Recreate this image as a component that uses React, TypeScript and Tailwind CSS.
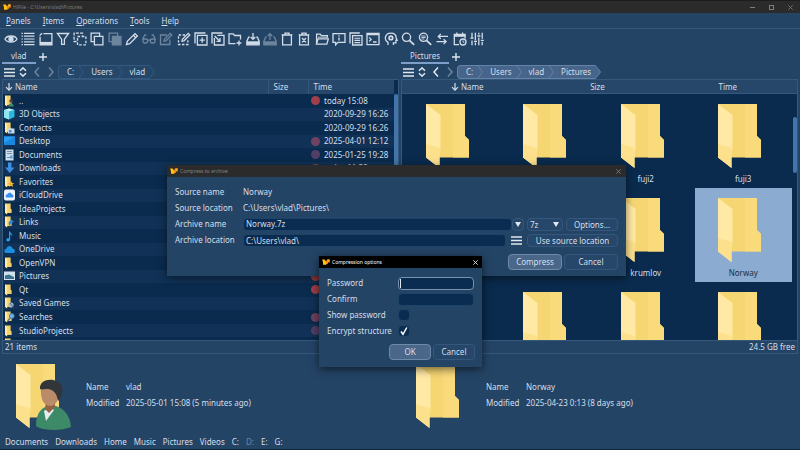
import React from "react";

type Kids = { children?: React.ReactNode };

function Ico({ children, muted }: Kids & { muted?: boolean }) {
  return (
    <svg
      viewBox="0 0 14 14"
      className={muted ? "size-3.5 text-[#6e859e]" : "size-3.5 text-[#d3dde8]"}
      fill="none"
      stroke="currentColor"
      strokeWidth="1.3"
      aria-hidden="true"
    >
      {children}
    </svg>
  );
}

function Logo() {
  return (
    <svg viewBox="0 0 8 6" className="h-1.5 w-2 shrink-0" aria-hidden="true">
      <path d="M0.2 0.4H2.6L4 2.4V5.8H1V3.4Z" fill="#ffc21a" />
      <path d="M4 2.4L5.2 0.4H7.8V3.6H6V4.6L4 5.8Z" fill="#f58f10" />
      <path d="M5.2 0.4H7.8L6 3Z" fill="#ffb52e" />
    </svg>
  );
}

const tools: { name: string; muted?: boolean; art: React.ReactNode }[] = [
  {
    name: "View",
    art: (
      <>
        <path d="M1 7 C3 3 11 3 13 7 C11 11 3 11 1 7 Z" />
        <circle cx="7" cy="7" r="2" fill="currentColor" />
      </>
    ),
  },
  {
    name: "List",
    art: (
      <path
        strokeWidth="1.2"
        d="M0.5 1.4h1.4M3 1.4h10.5M0.5 4.2h1.4M3 4.2h10.5M0.5 7h1.4M3 7h10.5M0.5 9.8h1.4M3 9.8h10.5M0.5 12.6h1.4M3 12.6h10.5"
      />
    ),
  },
  {
    name: "Panel",
    art: (
      <>
        <path d="M4.4 1.6h8.5v11.2H1.1V4.8" />
        <path d="M.6 3.6L3 1.2" />
        <path d="M1 11.4h12" strokeWidth="3" />
      </>
    ),
  },
  { name: "Filter", art: <path d="M1.4 1.5h11.2L8.4 7.2v5.2H5.6V7.2Z" /> },
  {
    name: "Duplicate",
    art: (
      <>
        <path d="M3.5 9.5H1.1V1.1h8.4v2.4" strokeDasharray="3 1.2" />
        <path d="M4.5 4.5h8.4v8.4H4.5Z" strokeDasharray="2.6 1.6" />
      </>
    ),
  },
  {
    name: "Copy",
    art: (
      <>
        <path d="M4 9.6H1.1V1.1h8.5V4" />
        <path d="M4.4 4.4h8.5v8.5H4.4Z" />
      </>
    ),
  },
  {
    name: "Paste",
    muted: true,
    art: (
      <>
        <path d="M4 9.6H1.1V1.1h8.5V4" />
        <path d="M4.4 4.4h8.5v8.5H4.4Z" fill="currentColor" />
      </>
    ),
  },
  {
    name: "Rename",
    art: <path d="M1.5 12.5l.8-3.2L10 1.6l2.4 2.4-7.7 7.7ZM8.4 3.3l2.4 2.4" />,
  },
  {
    name: "Compare",
    muted: true,
    art: (
      <>
        <rect x="1" y="7" width="4.6" height="4" rx="1.4" />
        <rect x="8.4" y="7" width="4.6" height="4" rx="1.4" />
        <path d="M5.6 8.2h2.8M1 8V6.5L2.8 3h1.6M13 8V6.5L11.2 3H9.6" />
      </>
    ),
  },
  {
    name: "Edit",
    muted: true,
    art: (
      <>
        <path d="M8 3H1.5v9.5h9.4V7.5" />
        <path d="M5 9.2l.4-2L11.2 1.4l1.6 1.6L7 8.8Z" />
      </>
    ),
  },
  {
    name: "Batch edit",
    art: (
      <>
        <path d="M8 3H1.5v9.5h9.4V7.5" strokeDasharray="2.4 1.5" />
        <path d="M5 9.2l.4-2L11.2 1.4l1.6 1.6L7 8.8Z" />
      </>
    ),
  },
  {
    name: "Copy to",
    art: (
      <>
        <path d="M1 11.4V1h10.4M3.4 3.4h9.6V13H3.4Z" />
        <path d="M8.2 5.6v5.2M5.6 8.2h5.2" />
      </>
    ),
  },
  {
    name: "Move to",
    art: (
      <>
        <path d="M1 11.4V1h10.4M3.4 6V13H13V3.4H6.4" />
        <path d="M3.6 4l4.8 4.8M9 6v3.4H5.6" />
      </>
    ),
  },
  {
    name: "New folder",
    art: (
      <>
        <path d="M7.4 11.6H1V1.9h4.2l1.4 1.6h5.9V7.4" />
        <path d="M11 8.6v4.8M8.6 11h4.8" />
      </>
    ),
  },
  {
    name: "Pack",
    art: (
      <>
        <path d="M3.8 5.2H2.6L.8 9.4v3.4h12.4V9.4l-1.8-4.2h-1.2" />
        <path d="M1 11h12" strokeWidth="3.4" />
        <path d="M7 1v6M4.7 5L7 7.3 9.3 5" />
      </>
    ),
  },
  {
    name: "Unpack",
    muted: true,
    art: (
      <>
        <path d="M3.8 5.2H2.6L.8 9.4v3.4h12.4V9.4l-1.8-4.2h-1.2" />
        <path d="M1 11h12" strokeWidth="3.4" />
        <path d="M7 8V2M4.7 4L7 1.7 9.3 4" />
      </>
    ),
  },
  {
    name: "Recycle",
    art: <path d="M2.6 3.2h8.8v9.6H2.6ZM1.6 2.8h10.8M5 2.4V1.2h4v1.2" />,
  },
  {
    name: "Delete",
    art: (
      <path d="M2.6 3.2h8.8v9.6H2.6ZM1.6 2.8h10.8M5 2.4V1.2h4v1.2M5 6l4 4.4M9 6l-4 4.4" />
    ),
  },
  {
    name: "Open folder",
    art: (
      <>
        <path d="M1.6 12V2.2h3.6l1.3 1.4h5.9v2.2" />
        <path d="M1.4 12.2L3 6.8h10.4l-1.6 5.4Z" />
        <path d="M3 5.2h9" strokeWidth="0.9" />
      </>
    ),
  },
  {
    name: "Info",
    art: (
      <>
        <path d="M1 1.6h12v8.8H6L3.6 12.8V10.4H1Z" />
        <path d="M7 5.4v3.2M7 3.2v1.2" />
      </>
    ),
  },
  {
    name: "Clipboard",
    art: (
      <>
        <path d="M1 11.4V1h9.8M3.6 3.6h9.4V13H3.6Z" />
        <path d="M5.4 6.2h5.8M5.4 8.4h5.8M5.4 10.6h5.8" strokeWidth="1.1" />
      </>
    ),
  },
  {
    name: "Terminal",
    art: <path d="M1 1.4h12v11.2H1ZM1 2.6h12M3.2 5.4l2 2-2 2M7 10h3.6" />,
  },
  {
    name: "Assistant",
    art: (
      <>
        <path d="M4 13v-2.6C-.6 7.6 1.2 1.2 6.8 1.1c3.8 0 5.4 2.5 5.4 4.9l1 2.4h-1.3v2.5H9.4V13" />
        <circle cx="6.9" cy="5.9" r="1.8" strokeWidth="1.7" />
      </>
    ),
  },
  {
    name: "Find",
    art: (
      <>
        <circle cx="5.5" cy="5.3" r="4.1" />
        <path d="M8.5 8.3l4.7 4.6" strokeWidth="1.7" />
      </>
    ),
  },
  {
    name: "Find in text",
    art: (
      <>
        <circle cx="5.5" cy="5.3" r="4.1" />
        <path d="M8.5 8.3l4.7 4.6" strokeWidth="1.7" />
        <path d="M3.4 4h4.2M3.4 5.5h4.2M3.4 7h3" strokeWidth="0.9" />
      </>
    ),
  },
  {
    name: "Synchronize",
    art: <path d="M13 4.4H3.5M5.8 2L3.3 4.4l2.5 2.4M1.5 9.6H11M8.6 7.2l2.5 2.4-2.5 2.4" />,
  },
  {
    name: "Schedule",
    art: (
      <>
        <path d="M6 12.6H1.3V2.4h10.8v4M3.8.6v2M9.6.6v2" />
        <path d="M1.3 3.6h10.8" strokeWidth="2.4" />
        <circle cx="10" cy="10" r="3" />
        <path d="M10 8.4V10.2h1.3" strokeWidth="0.9" />
      </>
    ),
  },
  {
    name: "Settings",
    art: (
      <path d="M2 .8v5M.4 6.2h3.2M2 8.4v4.8M5.4.8v7.4M5.4 10.6v2.6M4 9.4h3M8.8.8v1.8M7.4 4h3M8.8 5.4v7.8M12.2.8v6M10.8 8.4h3M12.2 9.8v3.4" />
    ),
  },
];

function FolderArt() {
  return (
    <>
      <path d="M7 0H46V32L50 36V53.5H7Z" fill="#f6d673" />
      <path d="M34 0H46V32L50 36V53.5H34Z" fill="#fadb7c" />
      <path d="M7 0L21.5 11V46L20.5 48V64L7 53.5Z" fill="#ffe9a4" />
      <path d="M7 40L21 44V46L20.5 48V64L7 53.5Z" fill="#fde08c" />
    </>
  );
}

function PersonArt() {
  return (
    <>
      <path d="M27 62C27 48 33 43 42 41C53 42 61 50 62 63C52 67 34 67 27 62Z" fill="#3d8a68" />
      <path d="M35 47L41 43L45 46L37 57Z" fill="#e4ecf0" />
      <path d="M37 36L46 35V43L40 49L36 45Z" fill="#946244" />
      <path d="M32 24C36 19 46 19 49 26C51 35 47 42 41 42C34 42 31 33 32 24Z" fill="#b98b68" />
      <path d="M31 25C30 13 50 13 53 23C54 30 52 35 49 37C48 31 46 26 39 25C35 25 32 26 31 25Z" fill="#333638" />
    </>
  );
}

function BigFolder({ person }: { person?: boolean }) {
  return (
    <svg viewBox="0 0 64 66" className="h-[66px] w-16 shrink-0" aria-hidden="true">
      <FolderArt />
      {person ? <PersonArt /> : null}
    </svg>
  );
}

const smallFolder = (
  <>
    <path d="M1 0.5H6.6V5.5L7.6 6.5V10H1Z" fill="#f3d06c" />
    <path d="M1 0.5L3.2 2V11.6L1 10Z" fill="#ffeaa8" />
  </>
);

const glyphs: Record<string, React.ReactNode> = {
  folder: smallFolder,
  user: (
    <>
      {smallFolder}
      <circle cx="7" cy="6" r="1.7" fill="#5b4133" />
      <path d="M4.4 11.5C4.4 7 9.6 7 9.8 11.5Z" fill="#3d8a68" />
    </>
  ),
  cube: (
    <>
      <path d="M0 2L5 0.5L10.5 2V9L5 11.5L0 9.5Z" fill="#2bb6dc" />
      <path d="M0 2L5 3.2V11.5L0 9.5Z" fill="#8fe6f2" />
      <path d="M0 2L5 0.5L10.5 2L5 3.2Z" fill="#c5f3f7" />
    </>
  ),
  contacts: (
    <>
      {smallFolder}
      <path d="M4 6.5H10.5V11.5H4Z" fill="#c8dcea" />
      <path d="M5 8H7.5V10.5H5Z" fill="#4b8fc0" />
    </>
  ),
  desktop: (
    <>
      <path d="M0 1.5H11V10H0Z" fill="#1787e0" />
      <path d="M0 1.5H11L0 8Z" fill="#2b9df2" />
    </>
  ),
  doc: (
    <>
      <path d="M1.5 0.5H9.5V11.5H1.5Z" fill="#cfe0ec" />
      <path d="M3 2.5H8M3 4.5H8M3 8.5H6" stroke="#6f93ad" />
      <path d="M6 6.5H8.5V9.5H6Z" fill="#5d9fcc" />
    </>
  ),
  down: <path d="M4 0.5H7.5V5.5H10.5L5.7 11L1 5.5H4Z" fill="#3d8ede" />,
  star: (
    <>
      {smallFolder}
      <path d="M7 5l1 2h2.2L8.5 8.6l.7 2.4L7 9.7 4.8 11l.7-2.4L3.8 7H6Z" fill="#f2b02c" />
    </>
  ),
  icloud: (
    <>
      <rect x="0" y="0.5" width="11" height="11" rx="2" fill="#edf3fa" />
      <path d="M2.5 8.5C.8 7.5 1.8 5.2 3.3 5.5C4 3 7.5 3 8 5.5C10 5.6 10 8.2 8.5 8.5Z" fill="#3a8eed" />
    </>
  ),
  link: (
    <>
      {smallFolder}
      <path d="M4.5 6.5L7.5 3.5L10 6L7.5 6.5L5.5 11Z" fill="#2f86cf" />
    </>
  ),
  music: (
    <path d="M5 0.5C6 3 8.8 3 8.2 6.5C7.8 5 7 4.6 6.2 4.6V9.5C6 12 2.2 12 2.3 9.7C2.5 8.2 4 8 5 8.4Z" fill="#2a9ced" />
  ),
  onedrive: (
    <path d="M2.2 10C-.6 9.5-.3 6 2.2 6C3 2.5 7.5 2 8.4 5.5C11.6 5.5 11.6 10 9 10Z" fill="#1c8ee2" />
  ),
  picture: (
    <>
      <path d="M0 1.5H11V10H0Z" fill="#cfe2ee" />
      <path d="M1 5.5L5 4.5L10 7V9H1Z" fill="#3e7390" />
    </>
  ),
  game: (
    <>
      {smallFolder}
      <circle cx="7" cy="8" r="2.6" fill="#a9b9c4" />
      <path d="M6 6l3 4" stroke="#3f6688" />
    </>
  ),
  search: (
    <>
      {smallFolder}
      <circle cx="7.8" cy="5" r="2.4" fill="#76b3dd" stroke="#3f7fb2" />
      <path d="M6.2 6.8L3.5 10.5" stroke="#54718c" strokeWidth="1.3" />
    </>
  ),
};

type Row = { icon: string; name: string; time: string; dot?: "red" | "rose" | "plum" };

const rows: Row[] = [
  { icon: "user", name: "..", time: "today 15:08", dot: "red" },
  { icon: "cube", name: "3D Objects", time: "2020-09-29 16:26" },
  { icon: "contacts", name: "Contacts", time: "2020-09-29 16:26" },
  { icon: "desktop", name: "Desktop", time: "2025-04-01 12:12", dot: "rose" },
  { icon: "doc", name: "Documents", time: "2025-01-25 19:28", dot: "plum" },
  { icon: "down", name: "Downloads", time: "today 11:59", dot: "red" },
  { icon: "star", name: "Favorites", time: "" },
  { icon: "icloud", name: "iCloudDrive", time: "" },
  { icon: "folder", name: "IdeaProjects", time: "" },
  { icon: "link", name: "Links", time: "" },
  { icon: "music", name: "Music", time: "" },
  { icon: "onedrive", name: "OneDrive", time: "" },
  { icon: "folder", name: "OpenVPN", time: "" },
  { icon: "picture", name: "Pictures", time: "", dot: "red" },
  { icon: "folder", name: "Qt", time: "", dot: "red" },
  { icon: "game", name: "Saved Games", time: "" },
  { icon: "search", name: "Searches", time: "", dot: "rose" },
  { icon: "folder", name: "StudioProjects", time: "", dot: "plum" },
  { icon: "folder", name: "Tools", time: "" },
];

const dotColor = {
  red: "bg-[#a03f49]",
  rose: "bg-[#6f4263]",
  plum: "bg-[#523f68]",
};

function Burger() {
  return (
    <svg viewBox="0 0 11 9" className="h-[9px] w-[11px]" stroke="#dfe7ef" strokeWidth="1.6" aria-hidden="true">
      <path d="M0 1h11M0 4.5h11M0 8h11" />
    </svg>
  );
}

function SortArrow() {
  return (
    <svg viewBox="0 0 8 8" className="size-2 shrink-0" fill="none" stroke="#d3dde8" strokeWidth="1.2" aria-hidden="true">
      <path d="M4 0v7M1 4.2L4 7.2L7 4.2" />
    </svg>
  );
}

function TabBar({ label }: { label: string }) {
  return (
    <div className="flex h-3.5 shrink-0 items-stretch">
      <button className="border-b-2 border-[#7f9fcb] px-[9px] leading-3">{label}</button>
      <button className="flex w-3.5 items-center justify-center" aria-label="New tab">
        <svg viewBox="0 0 8 8" className="size-2" stroke="#dfe7ef" strokeWidth="1.4" aria-hidden="true">
          <path d="M4 0v8M0 4h8" />
        </svg>
      </button>
    </div>
  );
}

function PathBar({ parts, active }: { parts: string[]; active?: boolean }) {
  const fill = active ? "#47658a" : "#25476a";
  const line = active ? "#6483a6" : "#34597d";
  return (
    <div className="flex h-[15px] shrink-0 items-end pl-0.5">
      <div className="flex h-3.5 items-center">
        <button aria-label="Menu">
          <Burger />
        </button>
        <button className="ml-1" aria-label="History">
          <svg viewBox="0 0 8 10" className="h-2.5 w-2" fill="none" stroke="#dfe7ef" strokeWidth="1.5" aria-hidden="true">
            <path d="M1 3.8L4 .9l3 2.9M1 6.2L4 9.1l3-2.9" />
          </svg>
        </button>
        <button className="ml-1.5" aria-label="Back">
          <svg
            viewBox="0 0 8 10"
            className={active ? "h-2.5 w-2 text-[#e3eaf2]" : "h-2.5 w-2 text-[#6e859e]"}
            fill="none"
            stroke="currentColor"
            strokeWidth="1.5"
            aria-hidden="true"
          >
            <path d="M6 .5L2 5l4 4.5" />
          </svg>
        </button>
        <button className="ml-1.5" aria-label="Forward">
          <svg viewBox="0 0 8 10" className="h-2.5 w-2 text-[#6e859e]" fill="none" stroke="currentColor" strokeWidth="1.5" aria-hidden="true">
            <path d="M2 .5L6 5L2 9.5" />
          </svg>
        </button>
      </div>
      <nav className="ml-[3px] flex h-3.5 items-stretch" aria-label="Path">
        {parts.map((p, i) => (
          <React.Fragment key={p}>
            <button
              className={
                (active ? "border-y border-[#6483a6] bg-[#47658a] pr-1 " : "border-y border-[#34597d] bg-[#25476a] pr-1 ") +
                (i === 0 ? "rounded-l-sm border-l pl-2" : "pl-[7px]")
              }
            >
              {p}
            </button>
            <svg viewBox="0 0 6 14" className="h-3.5 w-1.5" aria-hidden="true">
              {i < parts.length - 1 ? (
                <>
                  <path d="M0 0H6V14H0Z" fill={fill} />
                  <path d="M0 .5H6M0 13.5H6M.5 .5L5.5 7L.5 13.5" fill="none" stroke={line} />
                </>
              ) : (
                <path d="M0 .5H.5L5.5 7L.5 13.5H0" fill={fill} stroke={line} />
              )}
            </svg>
          </React.Fragment>
        ))}
      </nav>
    </div>
  );
}

function FileTable() {
  return (
    <div className="flex min-h-0 flex-1 overflow-hidden border-x border-t border-[#34597d] bg-[#0a2b4d]">
      <table className="h-[271px] min-w-0 flex-1 table-fixed border-collapse">
        <thead>
          <tr className="h-3.5 bg-[#264769] text-left">
            <th className="p-0 pl-0.5 font-normal">
              <span className="flex items-center gap-0.5">
                <SortArrow />
                Name
              </span>
            </th>
            <th className="w-10 border-l border-[#34597d] p-0 pl-[5px] font-normal">Size</th>
            <th className="w-[86px] border-l border-[#34597d] p-0 pl-[5px] font-normal">Time</th>
          </tr>
        </thead>
        <tbody>
          {rows.map((r) => (
            <tr key={r.name} className="even:bg-[#113256]">
              <td className="p-0 pl-px">
                <span className="flex items-center gap-1">
                  <svg viewBox="0 0 11 12" className="h-3 w-[11px] shrink-0" aria-hidden="true">
                    {glyphs[r.icon]}
                  </svg>
                  {r.name}
                </span>
              </td>
              <td className="p-0" />
              <td className="p-0 pl-[3px]">
                <span className="flex items-center gap-1 whitespace-nowrap">
                  <span className={"size-[9px] shrink-0 rounded-full " + (r.dot ? dotColor[r.dot] : "")} />
                  {r.time}
                </span>
              </td>
            </tr>
          ))}
        </tbody>
      </table>
      <div className="w-1 shrink-0 pt-3.5">
        <div className="h-24 w-1 rounded-sm bg-[#4275ac]" />
      </div>
    </div>
  );
}

const folders = ["", "", "fuji2", "fuji3", "", "", "krumlov", "Norway", "", "", "", ""];

function FolderGrid() {
  return (
    <div className="flex min-h-0 flex-1 flex-col border-x border-t border-[#34597d] bg-[#0a2b4d]">
      <div className="grid h-3.5 shrink-0 grid-cols-3 border-b border-[#34597d] bg-[#264769] pr-1 text-center leading-[13px]">
        <span className="flex items-center justify-center gap-0.5">
          <SortArrow />
          Name
        </span>
        <span>Size</span>
        <span>Time</span>
      </div>
      <div className="flex min-h-0 flex-1 overflow-hidden">
        <ul className="grid flex-1 auto-rows-[94px] grid-cols-4">
          {folders.map((f, i) => (
            <li
              key={i}
              className={
                f === "Norway"
                  ? "flex flex-col items-center bg-[#8babd0] pt-2.5 text-[#1c2f45]"
                  : "flex flex-col items-center pt-2.5"
              }
            >
              {i === 8 ? null : <BigFolder />}
              <span className="mt-[3px]">{f}</span>
            </li>
          ))}
        </ul>
        <div className="w-[5px] shrink-0 pt-[23px]">
          <div className="ml-px h-14 rounded-sm bg-[#4275ac]" />
        </div>
      </div>
    </div>
  );
}

function Details({ name, modified, person }: { name: string; modified: string; person?: boolean }) {
  return (
    <section className="flex flex-1 items-start gap-[13px] pt-2.5 pl-[9px]">
      <BigFolder person={person} />
      <dl className="mt-[17px] grid grid-cols-[40px_auto] gap-y-1">
        <dt>Name</dt>
        <dd>{name}</dd>
        <dt>Modified</dt>
        <dd>{modified}</dd>
      </dl>
    </section>
  );
}

const btn = "rounded-sm border border-[#34587d] bg-[#264769]";
const btnMain = "rounded-sm border border-[#6d8aab] bg-[#4a6789]";
const field = "rounded-sm border border-[#1d4469] bg-[#092c50] px-0.5 outline-none";

function Close() {
  return (
    <svg viewBox="0 0 5 5" className="size-[5px]" stroke="currentColor" strokeWidth="0.8" aria-hidden="true">
      <path d="M.3 .3l4.4 4.4M4.7 .3L.3 4.7" />
    </svg>
  );
}

function DownArrow() {
  return (
    <svg viewBox="0 0 6 5" className="h-[5px] w-1.5" aria-hidden="true">
      <path d="M0 0h6L3 5Z" fill="#dfe7ef" />
    </svg>
  );
}

function ArchiveDialog() {
  return (
    <div
      role="dialog"
      aria-label="Compress to archive"
      className="absolute top-[165px] left-[167px] w-[459px] bg-[#244466] shadow-[0_2px_8px_rgba(0,0,0,0.5)]"
    >
      <header className="flex h-3 items-center gap-0.5 bg-[#2b2b2b] pr-[5px] pl-[3px] text-[5px] text-[#858585]">
        <Logo />
        <span className="flex-1">Compress to archive</span>
        <button aria-label="Close">
          <Close />
        </button>
      </header>
      <div className="grid grid-cols-[68px_1fr] gap-y-1 px-2 pt-[9px]">
        <span>Source name</span>
        <span>Norway</span>
        <span>Source location</span>
        <span>C:\Users\vlad\Pictures\</span>
        <label htmlFor="an">Archive name</label>
        <div className="-my-0.5 flex h-4 items-center gap-[3px]">
          <div className="flex h-[13px] flex-1">
            <input id="an" defaultValue="Norway.7z" className={field + " min-w-0 flex-1"} />
            <button className={btn + " flex w-3 items-center justify-center"} aria-label="Recent names">
              <DownArrow />
            </button>
          </div>
          <div className="relative">
            <select aria-label="Format" className={btn + " block h-[13px] w-9 appearance-none pl-0.5 leading-3"}>
              <option>7z</option>
            </select>
            <span className="pointer-events-none absolute top-1 right-1">
              <DownArrow />
            </span>
          </div>
          <button className={btn + " h-[13px] w-[52px] leading-[11px]"}>Options...</button>
        </div>
        <label htmlFor="al">Archive location</label>
        <div className="-my-0.5 flex h-4 items-center gap-[3px]">
          <input id="al" defaultValue="C:\Users\vlad\" className={field + " h-[13px] min-w-0 flex-1"} />
          <button className="mx-0.5" aria-label="Places">
            <Burger />
          </button>
          <button className={btn + " h-[13px] w-[91px] leading-[11px]"}>Use source location</button>
        </div>
      </div>
      <div className="mt-2 flex justify-end gap-0.5 px-2 pb-1.5">
        <button className={btnMain + " h-4 w-[54px]"}>Compress</button>
        <button className={btn + " h-4 w-[54px]"}>Cancel</button>
      </div>
    </div>
  );
}

function OptionsDialog() {
  return (
    <div
      role="dialog"
      aria-label="Compression options"
      className="absolute top-[256px] left-[319px] w-[163px] bg-[#244466] shadow-[0_2px_9px_rgba(0,0,0,0.6)]"
    >
      <header className="flex h-3 items-center gap-0.5 bg-black pr-1 pl-[3px] text-[5px] text-white">
        <Logo />
        <span className="flex-1">Compression options</span>
        <button aria-label="Close">
          <Close />
        </button>
      </header>
      <div className="grid auto-rows-[16px] grid-cols-[71px_minmax(0,1fr)] items-center px-2 pt-[7px]">
        <label htmlFor="pw">Password</label>
        <div className="flex h-[13px] items-center rounded-sm border border-[#7892b0] bg-[#092c50] pl-px">
          <span className="h-[9px] w-px bg-[#dfe7ef]" />
          <input id="pw" type="text" className="h-full min-w-0 flex-1 bg-transparent outline-none" />
        </div>
        <label htmlFor="cf">Confirm</label>
        <input id="cf" type="password" className={field + " h-[13px] w-full"} />
        <label htmlFor="sp">Show password</label>
        <input id="sp" type="checkbox" className="size-3 appearance-none rounded-sm border border-[#1d4469] bg-[#092c50]" />
        <label htmlFor="es" className="whitespace-nowrap">
          Encrypt structure
        </label>
        <span className="relative size-3">
          <input
            id="es"
            type="checkbox"
            defaultChecked
            className="block size-3 appearance-none rounded-sm border border-[#1d4469] bg-[#092c50]"
          />
          <svg
            viewBox="0 0 12 12"
            className="pointer-events-none absolute inset-0 size-3"
            fill="none"
            stroke="#fff"
            strokeWidth="1.5"
            aria-hidden="true"
          >
            <path d="M3 6.5L5 9.3L8.8 2.5" />
          </svg>
        </span>
      </div>
      <div className="mt-[5px] flex justify-end gap-0.5 px-[7px] pb-[7px]">
        <button className={btnMain + " h-4 w-[42px]"}>OK</button>
        <button className={btn + " h-4 w-[42px]"}>Cancel</button>
      </div>
    </div>
  );
}

const menus = ["Panels", "Items", "Operations", "Tools", "Help"];
const places = ["Documents", "Downloads", "Home", "Music", "Pictures", "Videos", "C:", "D:", "E:", "G:"];

export default function App() {
  return (
    <div className="relative flex h-screen w-full flex-col overflow-hidden border-b border-[#10263c] bg-[#244466] font-['Noto_Sans',sans-serif] text-[8px] leading-3 text-[#d6dfe8]">
      <header className="flex h-[13px] shrink-0 items-center gap-0.5 border-t border-[#1c1c1c] bg-[#2b2b2b] pr-[7px] pl-[3px] text-[5px] text-[#7d7d7d]">
        <Logo />
        <h1 className="flex-1">HiFile - C:\Users\vlad\Pictures</h1>
        <div className="flex items-center gap-3.5">
          <button className="h-px w-[5px] bg-[#7d7d7d]" aria-label="Minimize" />
          <button className="size-[5px] border border-[#7d7d7d]" aria-label="Maximize" />
          <button aria-label="Close">
            <Close />
          </button>
        </div>
      </header>
      <nav className="flex h-4 shrink-0 items-center gap-3 border-b border-[#34597d] pl-1.5">
        {menus.map((m) => (
          <button key={m}>
            <u>{m[0]}</u>
            {m.slice(1)}
          </button>
        ))}
      </nav>
      <div className="flex h-5 w-[484px] shrink-0 items-center justify-between pl-1" role="toolbar">
        {tools.map((t) => (
          <button key={t.name} aria-label={t.name}>
            <Ico muted={t.muted}>{t.art}</Ico>
          </button>
        ))}
      </div>
      <main className="flex min-h-0 flex-1 gap-0.5 px-0.5 pt-px">
        <div className="flex min-w-0 flex-1 flex-col">
          <TabBar label="vlad" />
          <PathBar parts={["C:", "Users", "vlad"]} />
          <FileTable />
        </div>
        <div className="flex min-w-0 flex-1 flex-col">
          <TabBar label="Pictures" />
          <PathBar parts={["C:", "Users", "vlad", "Pictures"]} active />
          <FolderGrid />
        </div>
      </main>
      <div className="mx-0.5 flex h-3.5 shrink-0 items-center justify-between border border-[#34597d] px-0.5">
        <span>21 items</span>
        <span>24.5 GB free</span>
      </div>
      <div className="flex h-[82px] shrink-0">
        <Details name="vlad" modified="2025-05-01 15:08 (5 minutes ago)" person />
        <Details name="Norway" modified="2025-04-23 0:13 (8 days ago)" />
      </div>
      <footer className="flex h-[13px] shrink-0 items-start gap-[7px] pl-[5px]">
        {places.map((p) => (
          <button key={p} className={p === "D:" ? "text-[#6e859e]" : ""}>
            {p}
          </button>
        ))}
      </footer>
      <ArchiveDialog />
      <OptionsDialog />
    </div>
  );
}
